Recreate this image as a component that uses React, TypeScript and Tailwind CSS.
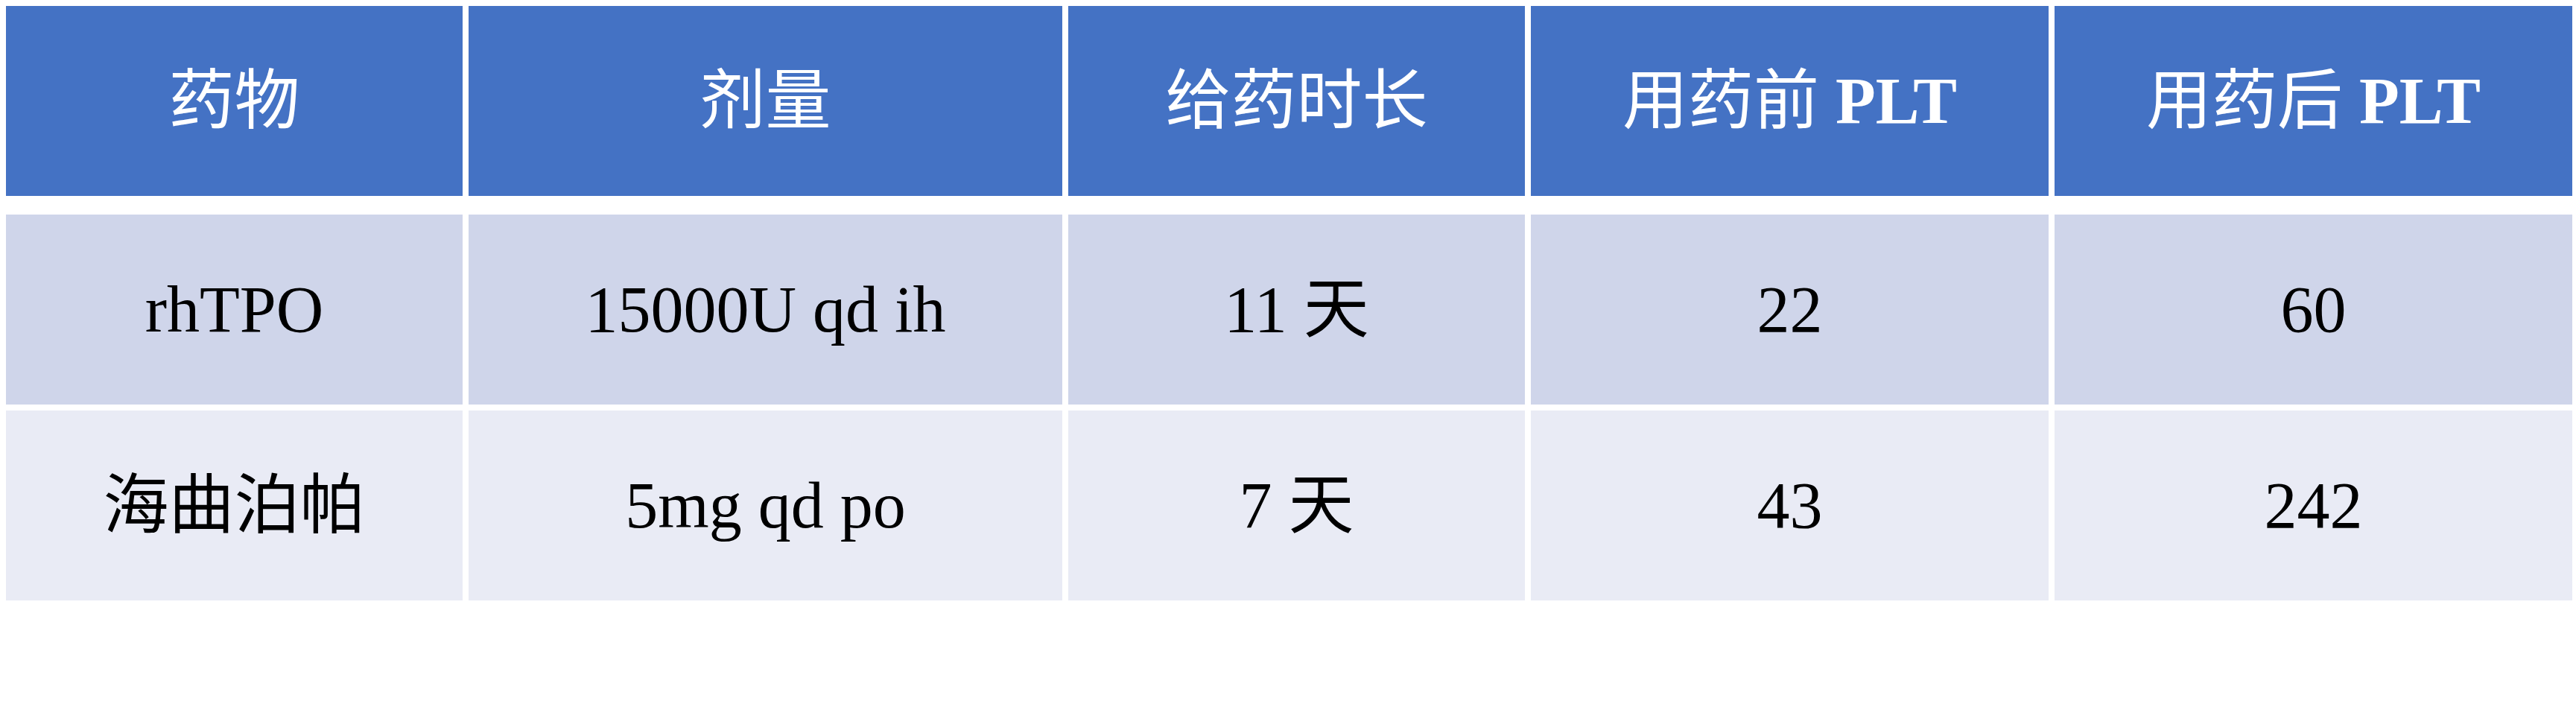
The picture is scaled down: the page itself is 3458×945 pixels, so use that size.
const header = ["药物", "剂量", "给药时长", "用药前", "用药后"];

const rows = [
  ["rhTPO", "15000U qd ih", "11 天", "22", "60"],
  ["海曲泊帕", "5mg qd po", "7 天", "43", "242"],
];

const font = "font-['Liberation_Serif','Noto_Sans_CJK_SC',serif]";

export default function App() {
  return (
    <div className={`min-h-screen w-full bg-white pl-[8px] pt-[8px] ${font}`}>
      <div className="grid grid-cols-[613px_797px_613px_695px_695px] gap-x-[8px]">
        {header.map((h, i) => (
          <div
            key={h}
            className="flex h-[255px] items-center justify-center bg-[#4472c4] text-[88px] text-white"
          >
            {h}
            {i >= 3 && <span className="ml-[22px] font-bold">PLT</span>}
          </div>
        ))}
      </div>

      <div className="mt-[25px] grid grid-cols-[613px_797px_613px_695px_695px] gap-x-[8px] gap-y-[8px]">
        {rows.map((r, ri) =>
          r.map((c, ci) => (
            <div
              key={`${ri}-${ci}`}
              className={`flex h-[255px] items-center justify-center text-[88px] text-black ${
                ri === 0 ? "bg-[#cfd5ea]" : "bg-[#e9ebf5]"
              }`}
            >
              {c}
            </div>
          ))
        )}
      </div>
    </div>
  );
}
